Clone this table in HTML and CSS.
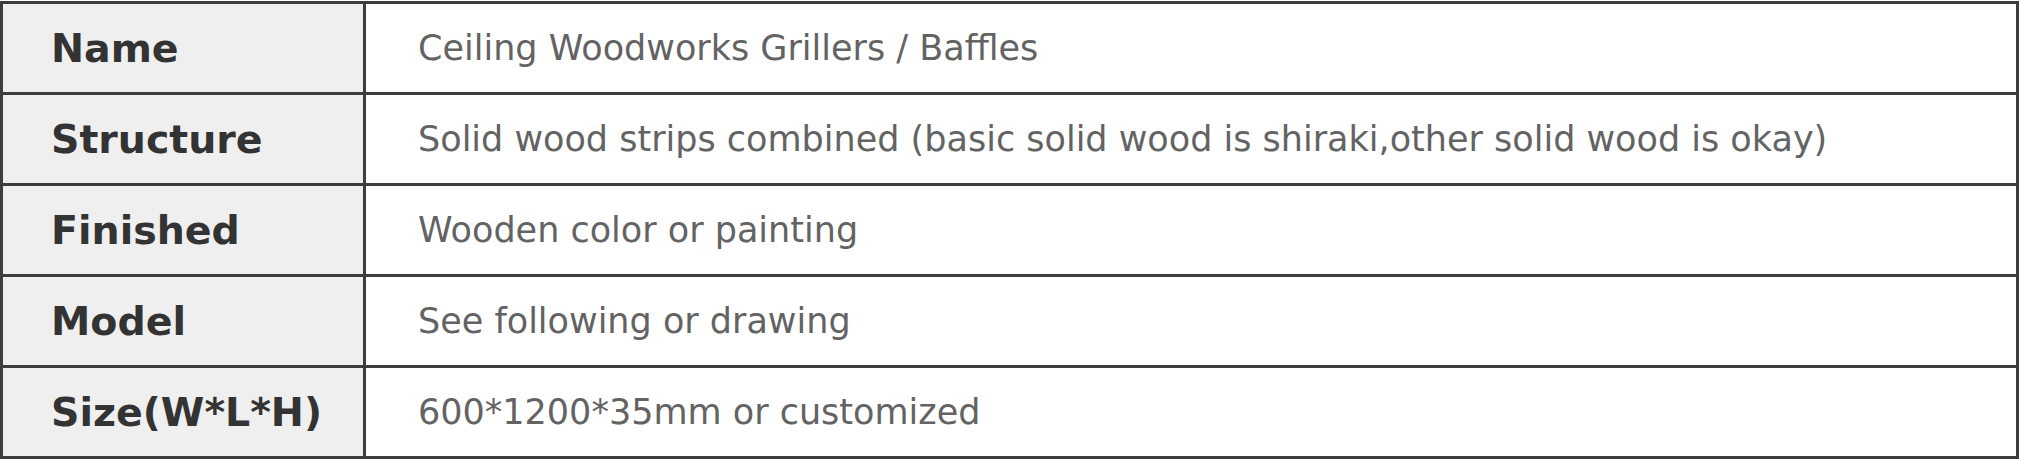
FILE: index.html
```html
<!DOCTYPE html>
<html lang="en">
<head>
<meta charset="utf-8">
<title>Ceiling Woodworks Grillers / Baffles</title>
<link rel="stylesheet" href="styles.css">
</head>
<body>
<div class="spec">
  <div class="label">Name</div>
  <div class="value">Ceiling Woodworks Grillers / Baffles</div>
  <div class="label">Structure</div>
  <div class="value">Solid wood strips combined (basic solid wood is shiraki,other solid wood is okay)</div>
  <div class="label">Finished</div>
  <div class="value">Wooden color or painting</div>
  <div class="label">Model</div>
  <div class="value">See following or drawing</div>
  <div class="label">Size(W*L*H)</div>
  <div class="value">600*1200*35mm or customized</div>
</div>
</body>
</html>
```

FILE: styles.css
```css
html, body {
  margin: 0;
  padding: 0;
  background: #ffffff;
}

body {
  font-family: "DejaVu Sans", "Liberation Sans", sans-serif;
  overflow: hidden;
}

.spec {
  display: grid;
  grid-template-columns: 363px 1fr;
  grid-auto-rows: 91px;
  width: 2019px;
  margin-top: 1px;
  box-sizing: border-box;
  border-top: 3px solid #3d3d3d;
  border-left: 3px solid #3d3d3d;
}

.label,
.value {
  display: flex;
  align-items: center;
  border-right: 3px solid #3d3d3d;
  border-bottom: 3px solid #3d3d3d;
  white-space: nowrap;
}

.label {
  background: #efefef;
  color: #333333;
  font-weight: bold;
  font-size: 39.5px;
  padding-left: 48px;
}

.value {
  background: #ffffff;
  color: #636363;
  font-size: 35px;
  padding-left: 52px;
}
```
